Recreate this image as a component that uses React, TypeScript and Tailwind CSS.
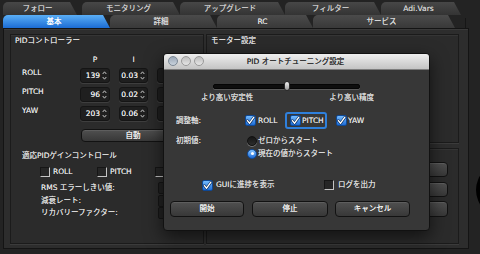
import React from "react";

function CheckOn() {
  return (
    <span className="w-[11px] h-[11px] rounded-[2px] border border-[#0e4896] bg-linear-to-b from-[#74bcff] to-[#1c6cd6] flex items-center justify-center shrink-0">
      <svg width="9" height="9" viewBox="0 0 9 9">
        <path d="M1.4 4.6 L3.6 7.2 L7.9 1.2" fill="none" stroke="#0b2a55" strokeWidth="2.6" strokeLinecap="round" strokeLinejoin="round" />
        <path d="M1.4 4.6 L3.6 7.2 L7.9 1.2" fill="none" stroke="#ffffff" strokeWidth="1.4" strokeLinecap="round" strokeLinejoin="round" />
      </svg>
    </span>
  );
}

function CheckOff() {
  return (
    <span className="w-[10px] h-[10px] border border-t-[#161616] border-l-[#161616] border-r-[#c4c4c4] border-b-[#c4c4c4] bg-[#262626] shrink-0" />
  );
}

function RadioOff() {
  return (
    <span className="w-[10px] h-[10px] rounded-full bg-linear-to-b from-[#161616] to-[#2c2c2c] border border-[#111111] shadow-[0_1px_0_#777777] shrink-0" />
  );
}

function RadioOn() {
  return (
    <span className="w-[10px] h-[10px] rounded-full bg-linear-to-b from-[#86c5ff] to-[#1a6ad6] border border-[#0e4a9c] flex items-center justify-center shrink-0">
      <span className="w-[3px] h-[3px] rounded-full bg-white" />
    </span>
  );
}

function Spin({ v, w }: { v: string; w: string }) {
  return (
    <div className={`${w} h-[15px] rounded-[3px] border border-[#151515] bg-[#1f1f1f] shadow-[0_1px_0_#3e3e3e] flex items-center justify-end pr-[2px] shrink-0`}>
      <span className="text-[#e8e8e8] mr-[2px]">{v}</span>
      <svg width="5" height="11" viewBox="0 0 5 11" className="shrink-0">
        <path d="M0.7 4 L2.5 1.8 L4.3 4" fill="none" stroke="#d4d4d4" strokeWidth="0.9" />
        <path d="M0.7 7 L2.5 9.2 L4.3 7" fill="none" stroke="#d4d4d4" strokeWidth="0.9" />
      </svg>
    </div>
  );
}

function Btn({ label, w, h }: { label: string; w: string; h: string }) {
  return (
    <div className={`${w} ${h} rounded-[4px] border border-[#121212] bg-linear-to-b from-[#505050] to-[#383838] shadow-[inset_0_1px_0_#5e5e5e] flex items-center justify-center text-[#f0f0f0] shrink-0`}>
      {label}
    </div>
  );
}

function BackTab({ label, cls }: { label: string; cls: string }) {
  return (
    <div className={`${cls} h-[13px] mt-[2px] rounded-tl-[5px] bg-linear-to-b from-[#474747] to-[#343434] [clip-path:polygon(0_0,calc(100%_-_7px)_0,100%_100%,0_100%)] flex items-center justify-center pr-[5px] text-[#cccccc] shrink-0`}>
      {label}
    </div>
  );
}

function FrontTab({ label, cls, active }: { label: string; cls: string; active?: boolean }) {
  return (
    <div
      className={`${cls} h-[13px] rounded-tl-[5px] [clip-path:polygon(0_0,calc(100%_-_7px)_0,100%_100%,0_100%)] flex items-center justify-center pr-[5px] shrink-0 ${
        active
          ? "bg-linear-to-b from-[#5aaef5] to-[#1b6cd4] text-white"
          : "bg-linear-to-b from-[#4b4b4b] to-[#393939] text-[#dcdcdc]"
      }`}
    >
      {label}
    </div>
  );
}

export default function App() {
  return (
    <div className="w-[480px] h-[254px] overflow-hidden relative bg-[#232323] flex font-['DejaVu_Sans','Noto_Sans_CJK_JP',sans-serif] text-[7.5px] leading-[10px] text-[#dddddd] [text-shadow:0_0_0.5px_currentColor]">
      <div className="w-[470px] flex flex-col shrink-0">
        {/* back tab row */}
        <div className="h-[15px] flex shrink-0 pl-[3px]">
          <BackTab label="フォロー" cls="w-[74px]" />
          <BackTab label="モニタリング" cls="w-[98px] ml-[5px]" />
          <BackTab label="アップグレード" cls="w-[105px]" />
          <BackTab label="フィルター" cls="w-[96px]" />
          <BackTab label="Adi.Vars" cls="w-[80px]" />
        </div>
        {/* front tab row */}
        <div className="h-[13px] flex shrink-0 pl-[3px]">
          <FrontTab label="基本" cls="w-[107px]" active />
          <FrontTab label="詳細" cls="w-[107px]" />
          <FrontTab label="RC" cls="w-[96px]" />
          <FrontTab label="サービス" cls="w-[142px]" />
          <div className="ml-[10px] w-[1px] h-[10px] mt-[3px] bg-[#161616]" />
        </div>
        {/* panel */}
        <div className="ml-[3px] w-[466px] h-[221px] border border-[#141414] bg-[#2d2d2d] shadow-[inset_0_1px_0_#3a3a3a] flex pt-[5px] pl-[6px] shrink-0">
          {/* left group */}
          <div className="w-[194px] h-[210px] border border-[#1b1b1b] bg-[#2b2b2b] shadow-[0_1px_0_#3b3b3b,inset_0_1px_0_#353535] flex flex-col shrink-0">
            <div className="ml-[4px] mt-[1px] h-[10px]">PIDコントローラー</div>
            <div className="flex mt-[9px] h-[10px]">
              <div className="w-[69px]" />
              <div className="w-[30px] text-center">P</div>
              <div className="w-[9px]" />
              <div className="w-[29px] text-center">I</div>
              <div className="w-[9px]" />
              <div className="w-[30px] text-center">D</div>
            </div>
            <div className="flex flex-col gap-[4px] mt-[3px]">
              {[
                ["ROLL", "139", "0.03", "23"],
                ["PITCH", "96", "0.02", "23"],
                ["YAW", "203", "0.06", "0"],
              ].map(([n, p, i, d]) => (
                <div key={n} className="flex items-center h-[15px]">
                  <div className="w-[69px] pl-[11px] mt-[-6px]">{n}</div>
                  <Spin v={p} w="w-[30px]" />
                  <div className="w-[9px]" />
                  <Spin v={i} w="w-[29px]" />
                  <div className="w-[9px]" />
                  <Spin v={d} w="w-[30px]" />
                </div>
              ))}
            </div>
            <div className="ml-[70px] mt-[8px]">
              <Btn label="自動" w="w-[104px]" h="h-[13px]" />
            </div>
            <div className="ml-[11px] mt-[9px] h-[10px]">適応PIDゲインコントロール</div>
            <div className="flex items-center ml-[29px] mt-[6px] h-[10px]">
              <div className="w-[57px] flex items-center gap-[3px]">
                <CheckOff />
                <span>ROLL</span>
              </div>
              <div className="w-[58px] flex items-center gap-[3px]">
                <CheckOff />
                <span>PITCH</span>
              </div>
              <div className="flex items-center gap-[3px]">
                <CheckOff />
                <span>YAW</span>
              </div>
            </div>
            <div className="flex flex-col mt-[5px]">
              {["RMS エラーしきい値:", "減衰レート:", "リカバリーファクター:"].map((t) => (
                <div key={t} className="flex items-center h-[12.5px]">
                  <div className="w-[147px] pl-[30px]">{t}</div>
                  <div className="w-[38px] h-[12px] border border-[#161616] bg-[#222222] rounded-[2px]" />
                </div>
              ))}
            </div>
          </div>
          {/* right column */}
          <div className="ml-[2px] w-[253px] flex flex-col shrink-0">
            <div className="h-[109px] border border-[#1b1b1b] bg-[#2b2b2b] shadow-[0_1px_0_#3b3b3b,inset_0_1px_0_#353535] shrink-0">
              <div className="ml-[4px] mt-[1px] h-[10px]">モーター設定</div>
            </div>
            <div className="mt-[5px] h-[96px] border border-[#1b1b1b] bg-[#2b2b2b] shadow-[0_1px_0_#3b3b3b,inset_0_1px_0_#353535] flex flex-col items-end pr-[10px] pt-[13px] gap-[4.5px] shrink-0">
              <Btn label="設定" w="w-[80px]" h="h-[15px]" />
              <Btn label="読込" w="w-[80px]" h="h-[15px]" />
              <Btn label="保存" w="w-[80px]" h="h-[16px]" />
            </div>
          </div>
        </div>
      </div>
      <div className="mt-[163px] ml-[6px] w-[54px] h-[54px] rounded-full bg-black shrink-0" />

      {/* dialog */}
      <div className="absolute left-[163px] top-[53px] w-[267px] h-[178px] rounded-[4px] border border-[#111111] bg-[#373737] shadow-[0_6px_18px_rgba(0,0,0,0.6)] flex flex-col overflow-hidden">
        <div className="h-[16px] shrink-0 bg-linear-to-b from-[#eeeeee] to-[#c4c4c4] border-b border-[#7d7d7d] relative flex items-center justify-center [text-shadow:none]">
          <div className="absolute left-[4px] top-[2px] flex gap-[3px]">
            <span className="w-[10px] h-[10px] rounded-full border border-[#7b8794] bg-linear-to-b from-[#9aa7b6] to-[#c9d2dc]" />
            <span className="w-[10px] h-[10px] rounded-full border border-[#9a9a9a] bg-linear-to-b from-[#bdbdbd] to-[#e6e6e6]" />
            <span className="w-[10px] h-[10px] rounded-full border border-[#9a9a9a] bg-linear-to-b from-[#bdbdbd] to-[#e6e6e6]" />
          </div>
          <span className="text-[#333333] mr-[2px] [text-shadow:0_0_0.4px_#333333]">PID オートチューニング設定</span>
        </div>
        {/* slider */}
        <div className="ml-[49px] mt-[11px] w-[147px] h-[10px] relative flex items-center shrink-0">
          <div className="w-full h-[5px] rounded-[2px] bg-[#0e0e0e] border border-[#050505] shadow-[0_1px_0_#5a5a5a]" />
          <div className="absolute left-[71px] top-0 w-[6px] h-[10px] rounded-[3px] border border-[#2a2a2a] bg-linear-to-b from-[#f2f2f2] to-[#9c9c9c]" />
        </div>
        <div className="ml-[37px] mt-[2px] w-[173px] h-[10px] flex justify-between shrink-0">
          <span>より高い安定性</span>
          <span>より高い精度</span>
        </div>
        {/* axes */}
        <div className="ml-[12px] mt-[9px] h-[17px] flex items-center shrink-0">
          <div className="w-[69px]">調整軸:</div>
          <div className="w-[40px] flex items-center gap-[2px]">
            <CheckOn />
            <span>ROLL</span>
          </div>
          <div className="w-[42px] h-[17px] rounded-[3px] border-2 border-[#2f80dc] flex items-center gap-[1px] pl-[3px]">
            <CheckOn />
            <span>PITCH</span>
          </div>
          <div className="ml-[9px] flex items-center gap-[1px]">
            <CheckOn />
            <span>YAW</span>
          </div>
        </div>
        {/* initial */}
        <div className="ml-[12px] mt-[5px] flex shrink-0">
          <div className="w-[71px] h-[13px] flex items-center">初期値:</div>
          <div className="flex flex-col">
            <div className="h-[13px] flex items-center gap-[1px]">
              <RadioOff />
              <span>ゼロからスタート</span>
            </div>
            <div className="h-[13px] flex items-center gap-[1px]">
              <RadioOn />
              <span>現在の値からスタート</span>
            </div>
          </div>
        </div>
        {/* options */}
        <div className="ml-[38px] mt-[20px] h-[10px] flex items-center shrink-0">
          <div className="w-[122px] flex items-center gap-[3px]">
            <CheckOn />
            <span>GUIに進捗を表示</span>
          </div>
          <div className="flex items-center gap-[4px]">
            <CheckOff />
            <span>ログを出力</span>
          </div>
        </div>
        {/* buttons */}
        <div className="ml-[6px] mt-[11px] flex shrink-0">
          <Btn label="開始" w="w-[74px]" h="h-[16px]" />
          <div className="w-[8px]" />
          <Btn label="停止" w="w-[76px]" h="h-[16px]" />
          <div className="w-[7px]" />
          <Btn label="キャンセル" w="w-[75px]" h="h-[16px]" />
        </div>
      </div>
    </div>
  );
}
